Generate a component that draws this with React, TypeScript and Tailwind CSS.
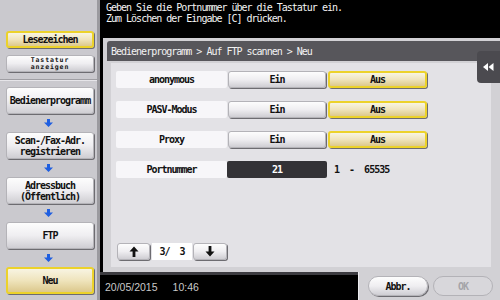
const mono = "font-['DejaVu_Sans_Mono',monospace] tracking-[-1px]";
const grayBtn =
  "bg-linear-to-b from-[#fdfdfd] via-[#efeef1] to-[#cfced3] border border-[#b4b3b8] shadow-[1px_1px_0_#6d6c71] rounded-[3px]";
const yellowBtn =
  "bg-linear-to-b from-[#f8f4e2] via-[#efe4bc] to-[#dcc88c] border-2 border-[#ecd22a] shadow-[1px_1px_0_#6d6c71] rounded-[3px]";

function DownArrow() {
  return (
    <svg width="9" height="8" viewBox="0 0 9 8">
      <path d="M3 0h3v3.5h3L4.5 8 0 3.5h3z" fill="#1f5fe0" />
    </svg>
  );
}

function PagerArrow({ up }: { up?: boolean }) {
  return (
    <svg width="10" height="11" viewBox="0 0 10 11" className={up ? '' : 'rotate-180'}>
      <path d="M5 0.5 9.5 5.5H6.4V11H3.6V5.5H0.5z" fill="#111" />
    </svg>
  );
}

function SideBtn({ children, active }: { children: React.ReactNode; active?: boolean }) {
  return (
    <div
      className={`ml-[6px] w-[88px] h-[27px] flex items-center justify-center text-center text-[10px] leading-[11px] font-bold text-[#111] ${mono} ${active ? yellowBtn : grayBtn}`}
    >
      {children}
    </div>
  );
}

function Arrow() {
  return (
    <div className="h-[18px] w-[100px] flex items-center justify-center pr-[3px]">
      <DownArrow />
    </div>
  );
}

function Toggle({ label }: { label: string }) {
  return (
    <div className="flex h-[17px]">
      <div className={`w-[111px] bg-[#f7f6f9] rounded-[2px] flex items-center justify-center text-[10px] font-bold text-[#111] ${mono}`}>
        {label}
      </div>
      <div className={`ml-[1px] w-[98px] flex items-center justify-center text-[10px] font-bold text-[#111] ${mono} ${grayBtn}`}>
        Ein
      </div>
      <div className={`ml-[2px] w-[99px] flex items-center justify-center text-[10px] font-bold text-[#111] ${mono} ${yellowBtn}`}>
        Aus
      </div>
    </div>
  );
}

export default function App() {
  return (
    <div className="w-[500px] h-[300px] flex bg-black overflow-hidden">
      <aside className="w-[100px] h-full bg-[#cac9ce] border-r-[3px] border-[#9b9a9f] flex flex-col pt-[31px]">
        <div
          className={`ml-[6px] w-[88px] h-[17px] flex items-center justify-center text-[10px] font-bold text-[#111] ${mono} ${yellowBtn}`}
        >
          Lesezeichen
        </div>
        <div
          className={`mt-[7px] ml-[6px] w-[88px] h-[17px] flex flex-col items-center justify-center text-[6.5px] leading-[6.5px] tracking-[0.9px] font-bold text-[#111] font-['DejaVu_Sans_Mono',monospace] ${grayBtn}`}
        >
          <span>Tastatur</span>
          <span>anzeigen</span>
        </div>
        <div className="mt-[7px] h-px bg-[#9f9ea3]" />
        <div className="h-px bg-[#e6e5e9]" />
        <div className="mt-[6px]" />
        <SideBtn>Bedienerprogramm</SideBtn>
        <Arrow />
        <SideBtn>
          Scan-/Fax-Adr.
          <br />
          registrieren
        </SideBtn>
        <Arrow />
        <SideBtn>
          Adressbuch
          <br />
          (Öffentlich)
        </SideBtn>
        <Arrow />
        <SideBtn>FTP</SideBtn>
        <Arrow />
        <SideBtn active>Neu</SideBtn>
      </aside>

      <main className="w-[400px] h-full flex flex-col">
        <div className={`h-[38px] pl-[6px] pt-[2px] text-[10px] leading-[11px] text-[#f4f4f4] ${mono}`}>
          <p>Geben Sie die Portnummer über die Tastatur ein.</p>
          <p>Zum Löschen der Eingabe [C] drücken.</p>
        </div>

        <section className="relative h-[234px] ml-[3px] bg-[#d2d1d5] flex flex-col">
          <div className={`mt-[3px] ml-[4px] h-[20px] bg-[#57565b] rounded-tl-[3px] pl-[4px] flex items-center text-[10px] text-[#f2f2f2] ${mono}`}>
            Bedienerprogramm &gt; Auf FTP scannen &gt; Neu
          </div>
          <div className="mt-[2px] ml-[8px] mr-[9px] h-[204px] bg-[#e3e2e6] flex flex-col pt-[8px] pl-[5px] pb-[7px]">
            <div className="flex flex-col gap-[13px]">
              <Toggle label="anonymous" />
              <Toggle label="PASV-Modus" />
              <Toggle label="Proxy" />
              <div className="flex h-[17px] items-center">
                <div className={`w-[111px] h-full bg-[#f7f6f9] rounded-[2px] flex items-center justify-center text-[10px] font-bold text-[#111] ${mono}`}>
                  Portnummer
                </div>
                <div className={`w-[100px] h-full bg-[#333236] rounded-[2px] flex items-center justify-center text-[10px] font-bold text-white ${mono}`}>
                  21
                </div>
                <span className={`ml-[7px] text-[10px] font-bold text-[#111] whitespace-pre ${mono}`}>1  -  65535</span>
              </div>
            </div>
            <div className="mt-auto flex h-[17px] ml-[1px]">
              <div className={`w-[33px] flex items-center justify-center ${grayBtn}`}>
                <PagerArrow up />
              </div>
              <div className={`ml-[2px] w-[40px] bg-white flex items-center justify-center text-[10px] font-bold text-[#111] whitespace-pre ${mono}`}>
                3/  3
              </div>
              <div className={`ml-[1px] w-[34px] flex items-center justify-center ${grayBtn}`}>
                <PagerArrow />
              </div>
            </div>
          </div>
          <div className="absolute left-[374px] top-[13px] w-[23px] h-[32px] bg-[#4b4a4f] rounded-l-[4px] flex items-center justify-center">
            <svg width="11" height="8" viewBox="0 0 11 8">
              <path d="M0 4 5 0v8z M5.5 4 10.5 0v8z" fill="#fff" />
            </svg>
          </div>
        </section>

        <div className="h-[28px] flex">
          <div className="w-[258px] border-t-[3px] border-[#3c3b40] flex items-center pl-[5px] text-[10.5px] text-[#c9c9c9] font-['Liberation_Sans',Arial,sans-serif]">
            <span>20/05/2015</span>
            <span className="ml-[15px]">10:46</span>
          </div>
          <div className="flex-1 bg-[#d2d1d5] border-l border-[#ececef] flex items-start pt-[4px] pl-[9px]">
            <div className={`w-[60px] h-[20px] flex items-center justify-center text-[10px] font-bold text-[#111] ${mono} ${grayBtn} rounded-full`}>
              Abbr.
            </div>
            <div className={`ml-[5px] w-[60px] h-[20px] rounded-full border border-[#b3b2b7] bg-[#d8d7db] flex items-center justify-center text-[10px] font-bold text-[#a5a4a9] ${mono}`}>
              OK
            </div>
          </div>
        </div>
      </main>
    </div>
  );
}
